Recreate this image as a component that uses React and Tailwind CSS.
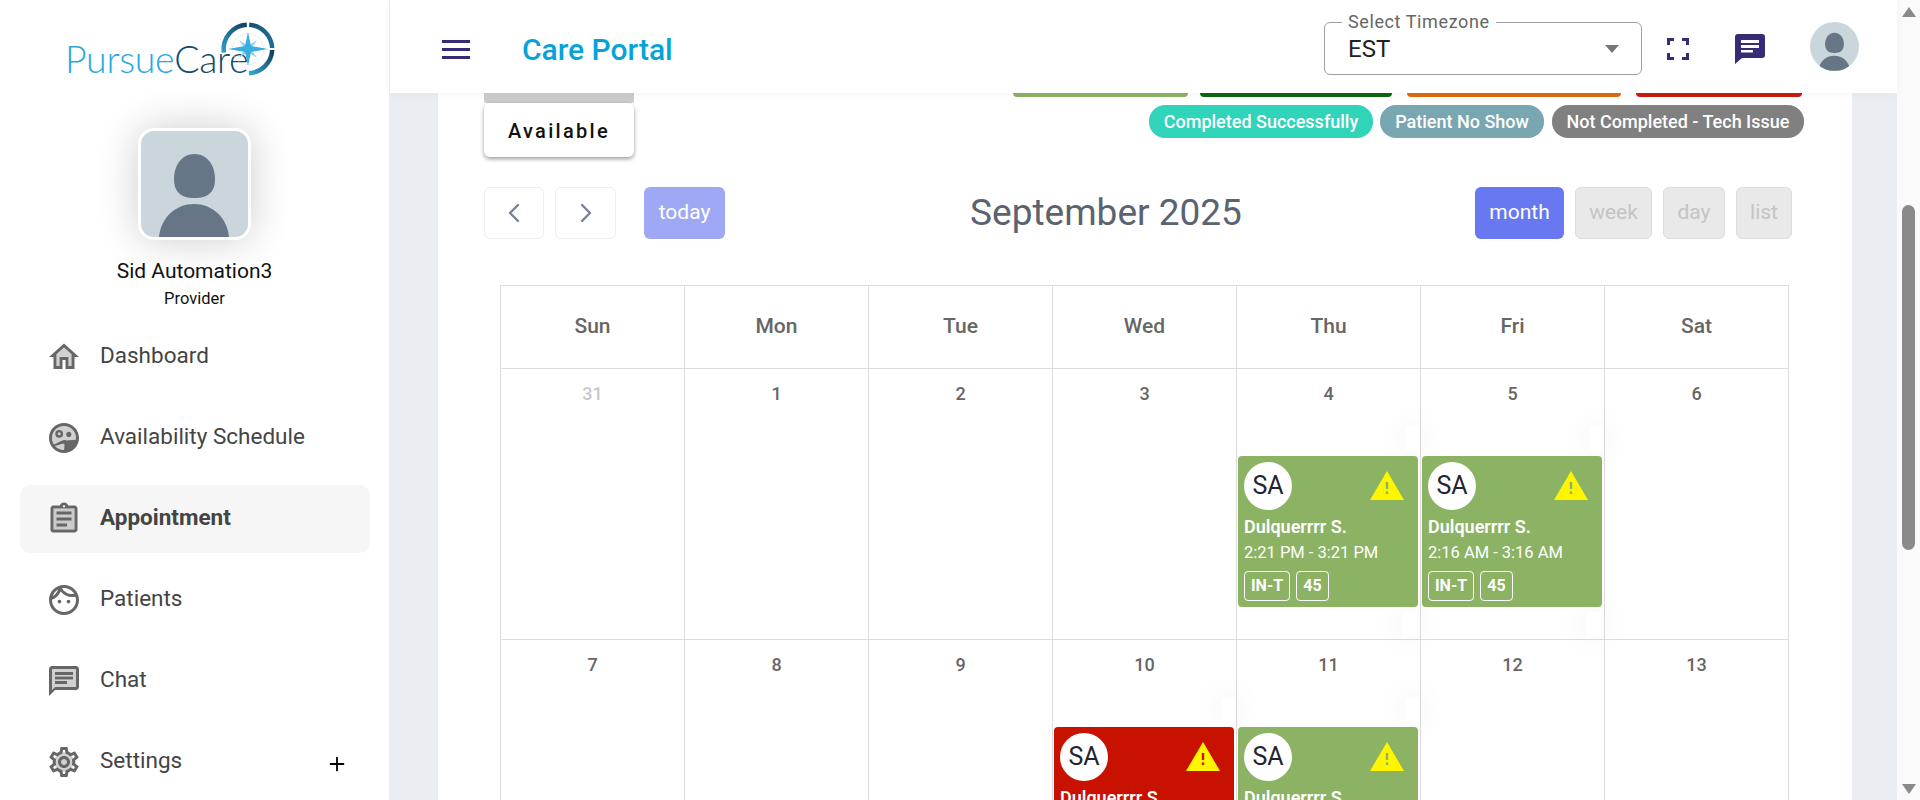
import { ChevronLeft, ChevronRight, Plus } from 'lucide-react';

function Person() {
  return (
    <svg viewBox="0 0 107 106" className="w-full h-full block">
      <path fill="#667686" d="M53.5 23C66 23 74 34 74 48C74 62 66 67 53.5 67C41 67 33 62 33 48C33 34 41 23 53.5 23Z" />
      <path fill="#667686" d="M18 106C20 86 35 73 53 73C71 73 86 86 88 106Z" />
    </svg>
  );
}

function Compass() {
  return (
    <svg viewBox="0 0 56 56" className="w-[56px] h-[56px] block">
      <defs>
        <linearGradient id="ringA" x1="0" y1="1" x2="1" y2="0">
          <stop offset="0" stopColor="#2a9ccb" />
          <stop offset="1" stopColor="#123f5f" />
        </linearGradient>
        <linearGradient id="ringB" x1="0" y1="0" x2="1" y2="0">
          <stop offset="0" stopColor="#14506f" />
          <stop offset="1" stopColor="#1c6d93" />
        </linearGradient>
        <linearGradient id="ringC" x1="0" y1="1" x2="1" y2="0">
          <stop offset="0" stopColor="#35a9d3" />
          <stop offset="1" stopColor="#0f3c5a" />
        </linearGradient>
      </defs>
      <path d="M3.8 31.5A24.5 24.5 0 0 1 26.800 3.800" fill="none" stroke="url(#ringA)" strokeWidth="4.500" />
      <path d="M29.200 3.800A24.500 24.500 0 0 1 52.200 27" fill="none" stroke="url(#ringB)" strokeWidth="4.500" />
      <path d="M52.200 29A24.500 24.500 0 0 1 29 52.200" fill="none" stroke="url(#ringC)" strokeWidth="4.500" />
      <circle cx="28" cy="28" r="15.500" fill="none" stroke="#c3ccd3" strokeWidth="0.700" strokeDasharray="1 1" />
      <path fill="#8fd0ec" d="M28 25L37 19L31 28L37 37L28 31L19 37L25 28L19 19Z" />
      <path fill="#39aee0" d="M28 11L31 25L48 28L31 31L28 45L25 31L8 28L25 25Z" />
    </svg>
  );
}

function Logo() {
  return (
    <div className="relative w-[210px] h-[56px] ml-[65px] mt-[22px]">
      <div className="absolute left-0 top-[12px] text-[37.5px] leading-[50px] font-light tracking-[-0.3px] [font-family:Lato,sans-serif] whitespace-nowrap">
        <span className="text-[#29a8de]">Pursue</span>
        <span className="text-[#134a6d]">Care</span>
      </div>
      <div className="absolute right-[-1px] -top-[1px]">
        <Compass />
      </div>
    </div>
  );
}

function Icon({ children }) {
  return (
    <svg viewBox="0 0 24 24" fill="#666" className="w-[36px] h-[36px] shrink-0">
      {children}
    </svg>
  );
}

const navItems = [
  {
    label: 'Dashboard',
    icon: (
      <>
        <path d="M12 3L2 12h3v8h6v-6h2v6h6v-8h3L12 3zm5 15h-2v-6H9v6H7v-7.81l5-4.5 5 4.5V18z" />
        <path d="M7 10.19V18h2v-6h6v6h2v-7.81l-5-4.5z" opacity=".3" />
      </>
    ),
  },
  {
    label: 'Availability Schedule',
    icon: (
      <>
        <path d="M12 2C6.48 2 2 6.48 2 12s4.48 10 10 10 10-4.48 10-10S17.52 2 12 2zm0 18c-4.41 0-8-3.59-8-8s3.59-8 8-8 8 3.59 8 8-3.59 8-8 8z" />
        <circle cx="12" cy="12" r="8" opacity=".3" />
        <path d="M8.8 6.6a2.6 2.6 0 1 0 0 5.2 2.6 2.6 0 0 0 0-5.2zm0 1.6a1 1 0 1 1 0 2 1 1 0 0 1 0-2z" />
        <circle cx="15.2" cy="9.6" r="1.7" />
        <path d="M5 16.500l5.500-2.600c1.200-.6 2.200-.6 3-.3l6.500-.4c.2 3.400-2 6-4.400 7-1.700.6-2.900.6-3.600.4l.4-4.100-.9-.8L5.500 17.500z" />
      </>
    ),
  },
  {
    label: 'Appointment',
    active: true,
    icon: (
      <>
        <path d="M5 5h14v14H5z" opacity=".3" />
        <path d="M7 15h7v2H7zm0-4h10v2H7zm0-4h10v2H7zm12-4h-4.180C14.400 1.840 13.300 1 12 1c-1.300 0-2.400.84-2.820 2H5c-.14 0-.27.01-.4.04-.39.08-.74.28-1.010.55-.18.18-.33.4-.43.64-.1.23-.16.49-.16.77v14c0 .27.06.54.16.78s.25.45.43.64c.27.27.62.47 1.010.55.13.02.26.03.4.03h14c1.100 0 2-.9 2-2V5c0-1.100-.9-2-2-2zm-7-.25c.41 0 .75.34.75.75s-.34.75-.75.75-.75-.34-.75-.75.34-.75.75-.75zM19 19H5V5h14v14z" />
      </>
    ),
  },
  {
    label: 'Patients',
    icon: (
      <path d="M10.250 13c0 .69-.56 1.250-1.250 1.250S7.750 13.690 7.750 13s.56-1.250 1.250-1.250 1.250.56 1.250 1.250zM15 11.750c-.69 0-1.250.56-1.250 1.250s.56 1.250 1.250 1.250 1.250-.56 1.250-1.250-.56-1.250-1.250-1.250zm7 .25c0 5.520-4.480 10-10 10S2 17.520 2 12 6.480 2 12 2s10 4.480 10 10zM10.660 4.120C12.060 6.440 14.600 8 17.500 8c.46 0 .91-.05 1.340-.12C17.440 5.560 14.900 4 12 4c-.46 0-.91.05-1.340.12zM4.420 9.470c1.710-.97 3.030-2.550 3.660-4.440C6.370 6 5.050 7.580 4.420 9.470zM20 12c0-.78-.12-1.530-.33-2.240-.7.15-1.420.24-2.170.24-3.130 0-5.920-1.440-7.760-3.690C8.690 8.870 6.600 10.880 4 11.860c.01.04 0 .09 0 .14 0 4.410 3.590 8 8 8s8-3.590 8-8z" />
    ),
  },
  {
    label: 'Chat',
    icon: (
      <>
        <path d="M4 18l2-2h14V4H4v14zm2-12h12v2H6V6zm0 3h12v2H6V9zm0 3h8v2H6v-2z" opacity=".3" />
        <path d="M20 2H4c-1.100 0-2 .9-2 2v18l4-4h14c1.100 0 2-.9 2-2V4c0-1.100-.9-2-2-2zm0 14H6l-2 2V4h16v12zM6 12h8v2H6zm0-3h12v2H6zm0-3h12v2H6z" />
      </>
    ),
  },
  {
    label: 'Settings',
    plus: true,
    icon: (
      <>
        <circle cx="12" cy="12" r="6.500" opacity=".3" />
        <path d="M19.430 12.980c.04-.32.07-.64.07-.98 0-.34-.03-.66-.07-.98l2.110-1.650c.19-.15.24-.42.12-.64l-2-3.460c-.09-.16-.26-.25-.44-.25-.06 0-.12.01-.17.03l-2.490 1c-.52-.4-1.080-.73-1.690-.98l-.38-2.650C14.460 2.180 14.250 2 14 2h-4c-.25 0-.46.18-.49.42l-.38 2.650c-.61.25-1.170.59-1.690.98l-2.490-1c-.06-.02-.12-.03-.18-.03-.17 0-.34.09-.43.25l-2 3.460c-.13.22-.07.49.12.64l2.110 1.650c-.04.32-.07.65-.07.98 0 .33.03.66.07.98l-2.110 1.650c-.19.15-.24.42-.12.64l2 3.460c.09.16.26.25.44.25.06 0 .12-.01.17-.03l2.490-1c.52.4 1.080.73 1.690.98l.38 2.650c.03.24.24.42.49.42h4c.25 0 .46-.18.49-.42l.38-2.650c.61-.25 1.170-.59 1.690-.98l2.490 1c.06.02.12.03.18.03.17 0 .34-.09.43-.25l2-3.460c.12-.22.07-.49-.12-.64l-2.110-1.650zm-1.980-1.710c.04.31.05.52.05.73 0 .21-.02.43-.05.73l-.14 1.130.89.7 1.080.84-.7 1.210-1.270-.51-1.040-.42-.9.68c-.43.32-.84.56-1.250.73l-1.060.43-.16 1.130-.2 1.350h-1.400l-.19-1.350-.16-1.130-1.060-.43c-.43-.18-.83-.41-1.230-.71l-.91-.7-1.060.43-1.270.51-.7-1.210 1.080-.84.89-.7-.14-1.130c-.03-.31-.05-.54-.05-.74s.02-.43.05-.73l.14-1.130-.89-.7-1.080-.84.7-1.210 1.270.51 1.040.42.9-.68c.43-.32.84-.56 1.250-.73l1.060-.43.16-1.130.2-1.350h1.390l.19 1.350.16 1.130 1.060.43c.43.18.83.41 1.230.71l.91.7 1.060-.43 1.270-.51.7 1.210-1.070.85-.89.7.14 1.130zM12 8c-2.210 0-4 1.790-4 4s1.790 4 4 4 4-1.790 4-4-1.790-4-4-4zm0 6c-1.100 0-2-.9-2-2s.9-2 2-2 2 .9 2 2-.9 2-2 2z" />
      </>
    ),
  },
];

function Sidebar() {
  return (
    <aside className="w-[390px] h-[800px] shrink-0 bg-white border-r border-[#eeeeee] overflow-hidden">
      <Logo />
      <div className="w-[113px] h-[112px] mx-auto mt-[50px] border-[3px] border-white rounded-[16px] bg-[#cbd5dc] overflow-hidden shadow-[0_0_40px_rgba(0,0,0,0.2)]">
        <Person />
      </div>
      <div className="mt-[17px] text-center text-[21px] leading-[28px] text-[#111]">Sid Automation3</div>
      <div className="mt-[4px] text-center text-[16.5px] leading-[20px] text-[#111]">Provider</div>
      <nav className="mt-[14px] ml-[20px] mr-[19px] flex flex-col gap-[13px]">
        {navItems.map((item) => (
          <div
            key={item.label}
            className={`h-[68px] flex items-center gap-[18px] pl-[26px] pr-[22px] rounded-[10px] text-[22.5px] text-[#444] ${
              item.active ? 'bg-[#f6f6f6] font-bold text-[#333]' : ''
            }`}
          >
            <Icon>{item.icon}</Icon>
            <span className="-mt-[2px]">{item.label}</span>
            {item.plus && <Plus className="ml-auto mt-[3px] text-black" size={22} strokeWidth={2} />}
          </div>
        ))}
      </nav>
    </aside>
  );
}

function Header() {
  return (
    <header className="relative z-20 h-[93px] shrink-0 bg-white flex items-center pl-[52px] pr-[38px] shadow-[0_2px_8px_rgba(0,0,0,0.04)]">
      <div className="w-[28px] mt-[5px] flex flex-col gap-[5px]">
        <div className="h-[3px] bg-[#372b78]" />
        <div className="h-[3px] bg-[#372b78]" />
        <div className="h-[3px] bg-[#372b78]" />
      </div>
      <div className="ml-[52px] mt-[5px] text-[30px] font-medium text-[#06a3da]">Care Portal</div>
      <div className="ml-auto flex items-center">
        <div className="relative w-[318px] h-[53px] border border-[#a0a0a0] rounded-[6px] flex items-center pl-[23px] pr-[22px] mt-[3px]">
          <span className="absolute left-[17px] -top-[11px] bg-white px-[6px] text-[18px] leading-[20px] tracking-[0.6px] text-[#666]">
            Select Timezone
          </span>
          <span className="text-[24px] text-[#222] mt-[2px]">EST</span>
          <span className="ml-auto mt-[2px] w-0 h-0 border-x-[7px] border-x-transparent border-t-[8px] border-t-[#777]" />
        </div>
        <svg viewBox="0 0 22 22" className="w-[22px] h-[22px] ml-[25px] mt-[5px]" fill="none" stroke="#372b78" strokeWidth="3">
          <path d="M1.500 7V1.500H7M15 1.500h5.500V7M20.500 15v5.500H15M7 20.500H1.500V15" />
        </svg>
        <svg viewBox="0 0 30 30" className="w-[30px] h-[30px] ml-[46px] mt-[5px]" fill="#372b78">
          <path d="M3 0h24a3 3 0 0 1 3 3v18a3 3 0 0 1-3 3H7l-7 6V3a3 3 0 0 1 3-3z" />
          <path fill="#fff" d="M6 6h18v3H6zM6 11h18v3H6zM6 16h12v2.500H6z" />
        </svg>
        <div className="w-[49px] h-[49px] ml-[45px] rounded-full bg-[#cbd5dc] overflow-hidden">
          <Person />
        </div>
      </div>
    </header>
  );
}

function Scrollbar() {
  return (
    <div className="w-[23px] h-[800px] shrink-0 bg-[#fafafa] flex flex-col items-center">
      <div className="mt-[7px] w-0 h-0 border-x-[7px] border-x-transparent border-b-[10px] border-b-[#8a8a8a]" />
      <div className="mt-[188px] w-[13px] h-[345px] rounded-full bg-[#8a8a8a]" />
      <div className="mt-auto mb-[6px] w-0 h-0 border-x-[7px] border-x-transparent border-t-[10px] border-t-[#8a8a8a]" />
    </div>
  );
}

function Pill({ children, className }) {
  return (
    <div className={`h-[33px] pb-[1px] rounded-[16px] flex items-center justify-center text-white text-[18px] font-medium ${className}`}>
      {children}
    </div>
  );
}

function Legend() {
  return (
    <div className="flex justify-between pl-[46px] pr-[48px]">
      <div className="w-[150px]">
        <div className="h-[10px] bg-[#cccccc] rounded-b-[2px]" />
        <div className="h-[54px] pt-[1px] bg-white rounded-[6px] flex items-center justify-center text-[20px] font-medium tracking-[2.3px] text-[#111] shadow-[0_2px_4px_rgba(0,0,0,0.4)]">
          Available
        </div>
      </div>
      <div className="flex flex-col items-end">
        <div className="flex h-[4px] mr-[2px]">
          <div className="w-[175px] h-[4px] rounded-b-[16px] bg-[#8cb264] mr-[12px]" />
          <div className="w-[192px] h-[4px] rounded-b-[16px] bg-[#0d660f] mr-[15px]" />
          <div className="w-[214px] h-[4px] rounded-b-[16px] bg-[#de6a12] mr-[15px]" />
          <div className="w-[166px] h-[4px] rounded-b-[16px] bg-[#c91c10]" />
        </div>
        <div className="flex mt-[8px]">
          <Pill className="w-[224px] bg-[#2fd4b9]">Completed Successfully</Pill>
          <Pill className="w-[164px] ml-[7px] bg-[#78a7b1]">Patient No Show</Pill>
          <Pill className="w-[252px] ml-[8px] bg-[#808080]">Not Completed - Tech Issue</Pill>
        </div>
      </div>
    </div>
  );
}

function Toolbar() {
  const arrow = 'h-[52px] rounded-[6px] border border-[#eeeeee] bg-white flex items-center justify-center text-[#75809a]';
  const off = 'h-[52px] rounded-[6px] border border-[#dddddd] bg-[#e9e9e9] text-[#c4c4c4] flex items-center justify-center';
  return (
    <div className="flex items-center mt-[28px] pl-[46px] pr-[60px]">
      <div className={`w-[60px] ${arrow}`}>
        <ChevronLeft size={32} strokeWidth={1.8} />
      </div>
      <div className={`w-[61px] ml-[11px] ${arrow}`}>
        <ChevronRight size={32} strokeWidth={1.8} />
      </div>
      <div className="w-[81px] h-[52px] ml-[28px] rounded-[6px] bg-[#9fa8f4] text-white text-[21px] flex items-center justify-center">
        today
      </div>
      <div className="flex-1 text-center pl-[12px] text-[37px] text-[#5b6270]">September 2025</div>
      <div className="flex text-[21px] gap-[11px]">
        <div className="w-[89px] h-[52px] rounded-[6px] bg-[#6878f0] text-white flex items-center justify-center">month</div>
        <div className={`w-[77px] ${off}`}>week</div>
        <div className={`w-[62px] ${off}`}>day</div>
        <div className={`w-[56px] ${off}`}>list</div>
      </div>
    </div>
  );
}

function Event({ red, time }) {
  return (
    <div className={`relative z-10 mx-[1px] w-[180px] h-[151px] rounded-[4px] px-[6px] pt-[6px] text-white ${red ? 'bg-[#c91100]' : 'bg-[#8cb264]'}`}>
      <div className="flex items-center justify-between">
        <div className="w-[48px] h-[48px] rounded-full bg-white text-[#1f2430] text-[25px] flex items-center justify-center">SA</div>
        <svg viewBox="0 0 34 29" className="w-[34px] h-[29px] mr-[8px]">
          <path d="M17 0L34 29H0Z" fill="#fff500" />
          <path d="M15.800 11h2.400v7h-2.400zM15.800 20.500h2.400v2.500h-2.400z" fill={red ? '#c91100' : '#8cb264'} />
        </svg>
      </div>
      <div className="mt-[5px] text-[18px] leading-[24px] font-semibold">Dulquerrrr S.</div>
      <div className="mt-[2px] text-[16.5px] leading-[24px]">{time}</div>
      <div className="flex gap-[6px] mt-[6px]">
        <div className="w-[46px] h-[30px] border border-white rounded-[4px] text-[16px] font-bold flex items-center justify-center">IN-T</div>
        <div className="w-[33px] h-[30px] border border-white rounded-[4px] text-[16px] font-bold flex items-center justify-center">45</div>
      </div>
    </div>
  );
}

function Ghost({ className }) {
  return <div className={`absolute w-[15px] h-[25px] bg-white rounded-l-[4px] shadow-[0_0_30px_rgba(0,0,0,0.09)] ${className}`} />;
}

const days = ['Sun', 'Mon', 'Tue', 'Wed', 'Thu', 'Fri', 'Sat'];

const rows = [
  [
    { n: 31, muted: true },
    { n: 1 },
    { n: 2 },
    { n: 3 },
    { n: 4, time: '2:21 PM - 3:21 PM', ghost: true },
    { n: 5, time: '2:16 AM - 3:16 AM', ghost: true },
    { n: 6 },
  ],
  [
    { n: 7 },
    { n: 8 },
    { n: 9 },
    { n: 10, red: true, time: '2:21 PM - 3:21 PM', ghost: true },
    { n: 11, time: '2:21 PM - 3:21 PM', ghost: true },
    { n: 12 },
    { n: 13 },
  ],
];

function Calendar() {
  return (
    <div className="ml-[62px] mt-[44px] w-[1289px] border-l border-t border-[#dddddd] grid grid-cols-7">
      {days.map((d) => (
        <div key={d} className="h-[83px] border-r border-b border-[#dddddd] flex items-center justify-center text-[21px] font-medium text-[#666]">
          {d}
        </div>
      ))}
      {rows.flat().map((c) => (
        <div key={c.n} className="relative h-[271px] border-r border-b border-[#dddddd]">
          <div className={`h-[50px] flex items-center justify-center text-[18px] font-medium ${c.muted ? 'text-[#c8c8c8]' : 'text-[#666]'}`}>
            {c.n}
          </div>
          {c.ghost && <Ghost className="right-0 top-[57px]" />}
          {c.ghost && <Ghost className="right-[3px] top-[243px]" />}
          {c.time && (
            <div className="mt-[37px]">
              <Event red={c.red} time={c.time} />
            </div>
          )}
        </div>
      ))}
    </div>
  );
}

export default function App() {
  return (
    <div className="flex h-[800px] w-[1920px] overflow-hidden bg-white [font-family:Roboto,sans-serif]">
      <Sidebar />
      <div className="flex-1 min-w-0 h-[800px] flex flex-col">
        <Header />
        <main className="flex-1 min-h-0 bg-[#eaeef3] pl-[48px] pr-[45px] overflow-hidden">
          <div className="bg-white h-full overflow-hidden">
            <Legend />
            <Toolbar />
            <Calendar />
          </div>
        </main>
      </div>
      <Scrollbar />
    </div>
  );
}
